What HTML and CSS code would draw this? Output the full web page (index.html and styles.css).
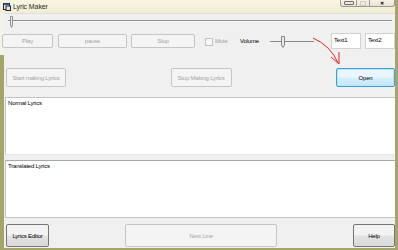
FILE: index.html
```html
<!DOCTYPE html>
<html>
    <head>
        <link rel="stylesheet" href="styles.css">
    </head>
    <body>
        <div class="window">
            <div class="titlebar">
                <svg class="app-icon" viewBox="0 0 8 8">
                    <rect x="0.5" y="0.5" width="6" height="6" fill="#e9ecef" stroke="#1d2a3a"/>
                    <rect x="0.5" y="0.5" width="6" height="1.6" fill="#2f5a86"/>
                    <rect x="3" y="3" width="4.5" height="4.5" fill="#dfe4ea" stroke="#1d2a3a"/>
                </svg>
                <span class="title">Lyric Maker</span>
                <div class="caption-buttons">
                    <span class="cap cap-min"><i></i></span>
                    <span class="cap cap-max"><i></i></span>
                    <span class="cap cap-close">&#x2716;</span>
                </div>
            </div>
            <div class="frame">
                <div class="edge-left"></div>
                <div class="client">
                    <div class="seek">
                        <div class="seek-line"></div>
                        <svg class="seek-thumb" viewBox="0 0 5 12">
                            <path d="M1.5 0.5 H3.5 V9 L2.5 11.5 L1.5 9 Z" fill="#ececec" stroke="#7a7a7a" stroke-width="0.8"/>
                        </svg>
                    </div>

                    <div class="controls">
                        <button class="btn btn-play" disabled>Play</button>
                        <button class="btn btn-pause" disabled>pause</button>
                        <button class="btn btn-stop" disabled>Stop</button>
                        <span class="check"></span>
                        <span class="mute-label">Mute</span>
                        <span class="volume-label">Volume</span>
                        <svg class="volume" viewBox="0 0 44 12">
                            <line x1="0" y1="5.5" x2="44" y2="5.5" stroke="#8a8a8a" stroke-width="1"/>
                            <path d="M11.5 0.5 H14.5 V9 L13 11.5 L11.5 9 Z" fill="#ececec" stroke="#6f6f6f" stroke-width="0.8"/>
                        </svg>
                        <div class="textbox text1">Text1</div>
                        <div class="textbox text2">Text2</div>
                    </div>

                    <div class="actions">
                        <button class="btn btn-start" disabled>Start making Lyrics</button>
                        <button class="btn btn-stopmake" disabled>Stop Making Lyrics</button>
                        <button class="btn btn-open">Open</button>
                    </div>

                    <textarea class="lyrics lyrics-normal">Normal Lyrics</textarea>
                    <textarea class="lyrics lyrics-translated">Translated Lyrics</textarea>

                    <div class="footer">
                        <button class="btn btn-live btn-editor">Lyrics Editor</button>
                        <button class="btn btn-next" disabled>Next Line</button>
                        <button class="btn btn-live btn-help">Help</button>
                    </div>
                </div>
                <div class="edge-right"></div>
            </div>
            <div class="edge-bottom"></div>

            <!-- red hand-drawn pointer from the volume slider to Open -->
            <svg class="annotation" viewBox="0 0 40 40">
                <path d="M3 3 Q21 11 28 28" fill="none" stroke="#e8231f" stroke-width="1"/>
                <path d="M29 17 V29 L21 22" fill="none" stroke="#e8231f" stroke-width="1"/>
            </svg>
        </div>
    </body>
</html>
```

FILE: styles.css
```css
body {
    margin: 0;
    width: 398px;
    height: 250px;
    overflow: hidden;
    font-family: "Liberation Sans", Arial, sans-serif;
}
.window {
    position: relative;
    display: flex;
    flex-direction: column;
    width: 398px;
    height: 250px;
    background: #f0f0f0;
}

/* title bar */
.titlebar {
    height: 13px;
    display: flex;
    align-items: center;
    background: linear-gradient(#f8f5e2, #f1ecd2);
    border-right: 3px solid #a5a56b;
    box-sizing: border-box;
}
.app-icon {
    width: 8px;
    height: 8px;
    margin-left: 3px;
}
.title {
    margin-left: 2px;
    font-size: 7px;
    color: #2b2b2b;
    letter-spacing: -0.1px;
}
.caption-buttons {
    margin-left: auto;
    align-self: flex-start;
    display: flex;
}
.cap {
    height: 7px;
    display: flex;
    align-items: center;
    justify-content: center;
    box-sizing: border-box;
    border: 1px solid #9a9a90;
    border-top: none;
    background: linear-gradient(#f4f2e6, #e7e4d4);
}
.cap-min {
    width: 17px;
    border-radius: 0 0 0 3px;
}
.cap-min i {
    width: 8px;
    height: 2px;
    border: 1px solid #6a6a6a;
    border-radius: 1px;
}
.cap-max {
    width: 13px;
    border-left: none;
}
.cap-max i {
    width: 4px;
    height: 3px;
    border: 1px solid #cfcdbf;
}
.cap-close {
    width: 25px;
    border-left: none;
    border-radius: 0 0 3px 0;
    font-size: 5px;
    color: #3a3a3a;
}

/* frame */
.frame {
    flex: 1;
    display: flex;
}
.edge-left {
    width: 4px;
    background: linear-gradient(#f3f3ea 42px, #a5a56b 42px);
}
.edge-right {
    width: 3px;
    background: #a5a56b;
}
.edge-bottom {
    height: 2px;
    background: #a5a56b;
}
.client {
    flex: 1;
    display: flex;
    flex-direction: column;
    border-top: 1px solid #dedede;
}

/* seek bar */
.seek {
    position: relative;
    height: 16px;
}
.seek-line {
    margin: 6px 3px 0 4px;
    height: 1px;
    background: #8e8e8e;
    border-bottom: 1px solid #fff;
}
.seek-thumb {
    position: absolute;
    left: 5px;
    top: 2px;
    width: 5px;
    height: 12px;
}

/* buttons */
.btn {
    font: inherit;
    font-size: 6px;
    letter-spacing: -0.2px;
    padding: 0;
    box-sizing: border-box;
    border: 1px solid #c6c6c6;
    border-radius: 2px;
    background: #f4f4f4;
    color: #a4a4a4;
}
.btn-live {
    border-color: #767676;
    background: linear-gradient(#f3f3f3 45%, #e2e2e2 55%, #d9d9d9);
    color: #000;
}
.btn-open {
    border-color: #3aa0d8;
    box-shadow: inset 0 0 0 1px #b9e6fa;
    background: linear-gradient(#eaf6fd 45%, #d6eefc 55%, #c3e6f8);
    color: #000;
}

.controls {
    display: flex;
    align-items: center;
    height: 16px;
    margin-top: 3px;
    font-size: 6px;
    letter-spacing: -0.2px;
}
.controls .btn {
    height: 14px;
}
.btn-play {
    width: 51px;
    margin-left: -2px;
}
.btn-pause {
    width: 69px;
    margin-left: 5px;
}
.btn-stop {
    width: 64px;
    margin-left: 4px;
}
.check {
    width: 8px;
    height: 8px;
    margin: 2px 0 0 10px;
    box-sizing: border-box;
    border: 1px solid #c3c3c3;
    background: #f7f7f7;
}
.mute-label {
    width: 25px;
    margin-left: 2px;
    color: #a4a4a4;
}
.volume-label {
    width: 30px;
    color: #000;
}
.volume {
    width: 44px;
    height: 12px;
    margin-top: 1px;
}
.textbox {
    width: 30px;
    height: 16px;
    box-sizing: border-box;
    border: 1px solid #d2d2d2;
    background: #fff;
    padding: 3px 0 0 2px;
    line-height: 7px;
    color: #000;
}
.text1 {
    margin-left: 17px;
}
.text2 {
    margin-left: 4px;
}

.actions {
    display: flex;
    justify-content: space-between;
    height: 19px;
    margin-top: 19px;
    padding-left: 2px;
}
.btn-start {
    width: 60px;
}
.btn-stopmake {
    width: 61px;
}
.btn-open {
    width: 59px;
}

/* lyric boxes */
.lyrics {
    display: block;
    height: 58px;
    margin: 10px 0 0 1px;
    box-sizing: border-box;
    border: 1px solid #c4c4c4;
    border-right: none;
    background: #fff;
    padding: 2px 2px;
    font: inherit;
    font-size: 6px;
    letter-spacing: -0.2px;
    line-height: 7px;
    color: #000;
    resize: none;
    overflow: hidden;
    outline: none;
}
.lyrics-normal {
    border-bottom-color: #e6e6ea;
}
.lyrics-translated {
    margin-top: 5px;
    border-top-color: #a9a9a9;
}

.footer {
    display: flex;
    justify-content: space-between;
    height: 23px;
    margin-top: 6px;
    padding-left: 2px;
}
.btn-editor {
    width: 43px;
}
.btn-next {
    width: 152px;
}
.btn-help {
    width: 42px;
}

.annotation {
    position: absolute;
    left: 310px;
    top: 35px;
    width: 40px;
    height: 40px;
}
```
